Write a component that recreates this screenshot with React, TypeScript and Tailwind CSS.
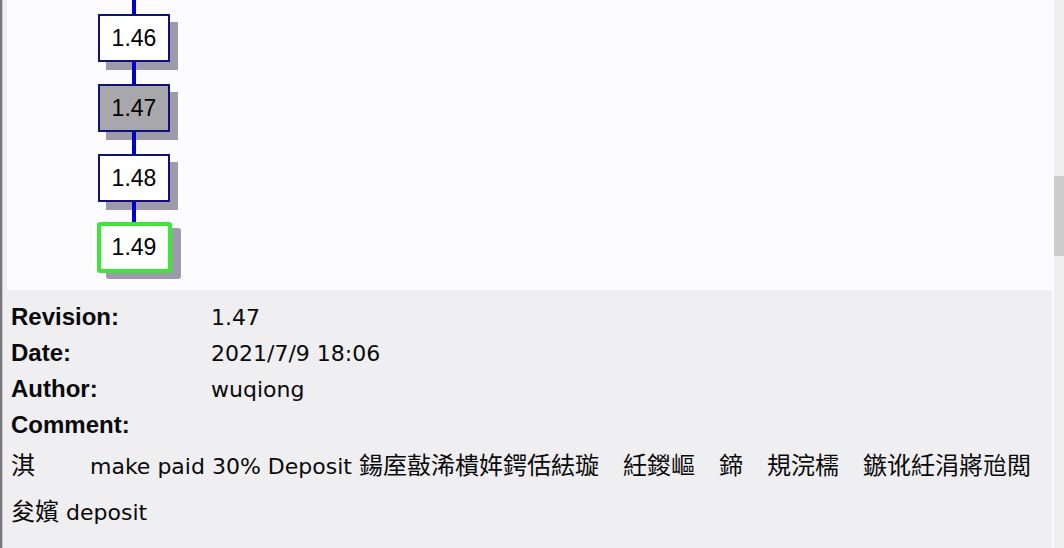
const nodes = [
  { rev: '1.46', kind: 'normal' },
  { rev: '1.47', kind: 'selected' },
  { rev: '1.48', kind: 'normal' },
  { rev: '1.49', kind: 'head' },
]

const fields = [
  { label: 'Revision:', value: '1.47' },
  { label: 'Date:', value: '2021/7/9 18:06' },
  { label: 'Author:', value: 'wuqiong' },
  { label: 'Comment:', value: '' },
]

function Connector({ h }: { h: string }) {
  return <div className={`w-[4px] bg-[#0000cc] ${h}`} />
}

function RevNode({ rev, kind }: { rev: string; kind: string }) {
  if (kind === 'head') {
    return (
      <div className="w-[75px] h-[51px] rounded-[3px] border-[4px] border-[#3fe63a] bg-white flex items-center justify-center shadow-[9px_6px_0_#9d9baa] text-[23px] font-['Liberation_Sans',sans-serif] text-black">
        {rev}
      </div>
    )
  }
  return (
    <div
      className={`w-[72px] h-[48px] border-2 border-[#10107a] flex items-center justify-center shadow-[8px_8px_0_#9d9baa] text-[23px] font-['Liberation_Sans',sans-serif] text-black ${
        kind === 'selected' ? 'bg-[#a8a7ab]' : 'bg-white'
      }`}
    >
      {rev}
    </div>
  )
}

export default function App() {
  return (
    <div className="w-[1064px] h-[548px] bg-[#efeef1] flex overflow-hidden font-['DejaVu_Sans','Noto_Sans_CJK_SC',sans-serif] text-[#0a0a0a]">
      {/* cut-off edge of the window behind */}
      <div className="w-[3px] bg-[#77767d] border-r border-[#c9c8cd]" />

      <div className="flex-1 flex flex-col">
        {/* revision graph */}
        <div className="h-[290px] ml-[4px] bg-[#fcfbfe] flex">
          <div className="ml-[89px] w-[76px] flex flex-col items-center">
            <Connector h="h-[14px]" />
            <RevNode {...nodes[0]} />
            <Connector h="h-[22px]" />
            <RevNode {...nodes[1]} />
            <Connector h="h-[22px]" />
            <RevNode {...nodes[2]} />
            <Connector h="h-[20px]" />
            <RevNode {...nodes[3]} />
          </div>
        </div>

        {/* revision details */}
        <div className="flex-1 pl-[8px] pt-[9px] border-r-2 border-[#fbfbfc]">
          <div className="grid grid-cols-[200px_1fr]">
            {fields.map(f => (
              <div key={f.label} className="contents">
                <div className="h-[36px] flex items-center text-[24px] font-bold font-['Liberation_Sans',sans-serif]">
                  {f.label}
                </div>
                <div className="h-[36px] flex items-center text-[22px]">{f.value}</div>
              </div>
            ))}
          </div>
          <div className="h-[46px] flex items-center whitespace-pre text-[22px]">
            <span className="text-[24px]">淇　　</span>
            <span> make paid 30% Deposit </span>
            <span className="text-[24px]">鍚庢敼浠樻姩鍔佸紶璇　紝鍐嶇　鍗　規浣檽　鏃讹紝涓嶈兘閲</span>
          </div>
          <div className="h-[46px] flex items-center whitespace-pre text-[22px]">
            <span className="text-[24px]">夋嬪</span>
            <span> deposit</span>
          </div>
        </div>
      </div>

      {/* scrollbar */}
      <div className="w-[10px] bg-[#efefef] flex flex-col">
        <div className="h-[176px]" />
        <div className="h-[80px] bg-[#cdcdcd]" />
      </div>
    </div>
  )
}
